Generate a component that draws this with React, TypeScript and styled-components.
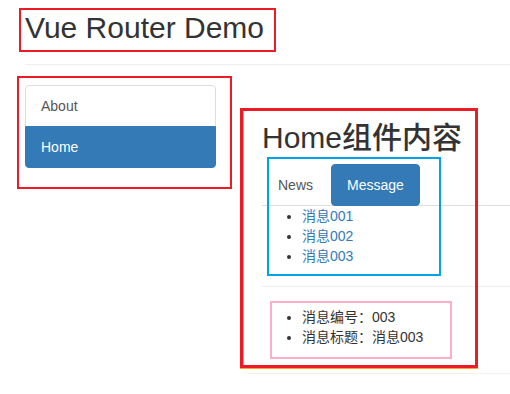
import React from "react";
import styled, { createGlobalStyle } from "styled-components";

const Global = createGlobalStyle`
  html, body { margin: 0; padding: 0; overflow: hidden; background: #fff; }
  body {
    font-family: "Liberation Sans", "Noto Sans CJK SC", sans-serif;
    font-size: 14px;
    line-height: 1.42857143;
    color: #333;
  }
  * { box-sizing: border-box; }
`;

const Page = styled.div`
  position: relative;
  width: 510px;
  height: 394px;
  padding-left: 25px;
  overflow: hidden;
`;

const PageHeader = styled.div`
  padding: 11px 0 10px;
  margin: 0 -40px 20px 0;
  border-bottom: 1px solid #eee;
`;

const Heading = styled.h2`
  margin: 0 0 10px;
  font-size: 30px;
  line-height: 1.1;
  font-weight: 500;
  color: #333;
`;

const Row = styled.div`
  display: flex;
  gap: 30px;
  align-items: flex-start;
`;

const ListGroup = styled.div`
  width: 191px;
  flex: none;
  display: flex;
  flex-direction: column;
`;

const ListItem = styled.a<{ $active?: boolean }>`
  display: block;
  padding: 10px 15px;
  line-height: 20px;
  margin-bottom: -1px;
  border: 1px solid ${(p) => (p.$active ? "#337ab7" : "#ddd")};
  background: ${(p) => (p.$active ? "#337ab7" : "#fff")};
  color: ${(p) => (p.$active ? "#fff" : "#555")};
  text-decoration: none;
  &:first-child { border-radius: 4px 4px 0 0; }
  &:last-child { border-radius: 0 0 4px 4px; margin-bottom: 0; }
`;

const Panel = styled.div`
  flex: 1;
  margin-right: -60px;
  background: #fff;
  border: 1px solid transparent;
  border-radius: 4px;
  box-shadow: 0 1px 1px rgba(0, 0, 0, 0.05);
`;

const PanelBody = styled.div`
  padding: 15px;
`;

const PanelTitle = styled(Heading)`
  margin: 20px 0 10px;
`;

const Tabs = styled.ul`
  display: flex;
  margin: 0;
  padding: 0;
  list-style: none;
  border-bottom: 1px solid #ddd;
`;

const Tab = styled.li`
  margin-bottom: -1px;
`;

const TabLink = styled.a<{ $active?: boolean }>`
  display: block;
  margin-right: 2px;
  padding: 10px 15px;
  line-height: 20px;
  border: 1px solid ${(p) => (p.$active ? "#337ab7" : "transparent")};
  border-radius: ${(p) => (p.$active ? "4px" : "4px 4px 0 0")};
  background: ${(p) => (p.$active ? "#337ab7" : "transparent")};
  color: ${(p) => (p.$active ? "#fff" : "#555")};
  text-decoration: none;
`;

const BulletList = styled.ul`
  margin: 0 0 10px;
  padding-left: 40px;
  list-style: disc;
  li { line-height: 20px; }
`;

const MsgLink = styled.a`
  color: #337ab7;
  text-decoration: none;
`;

const Rule = styled.hr`
  margin: 20px 0;
  border: 0;
  border-top: 1px solid #eee;
  height: 0;
`;

const Mark = styled.div<{ $color: string; $w?: number }>`
  position: absolute;
  border: ${(p) => p.$w ?? 2}px solid ${(p) => p.$color};
  pointer-events: none;
`;

const BigMark = styled(Mark)`
  box-shadow: inset 1px 0 0 #f7a53a, 0 1px 0 #f7a53a;
`;

type Box = { l: number; t: number; w: number; h: number };
const box = (b: Box) => ({ left: b.l, top: b.t, width: b.w, height: b.h });

export default function App() {
  return (
    <>
      <Global />
      <Page>
        <PageHeader>
          <Heading>Vue Router Demo</Heading>
        </PageHeader>
        <Row>
          <ListGroup>
            <ListItem>About</ListItem>
            <ListItem $active>Home</ListItem>
          </ListGroup>
          <Panel>
            <PanelBody>
              <PanelTitle>Home组件内容</PanelTitle>
              <Tabs>
                <Tab>
                  <TabLink>News</TabLink>
                </Tab>
                <Tab>
                  <TabLink $active>Message</TabLink>
                </Tab>
              </Tabs>
              <BulletList>
                <li><MsgLink>消息001</MsgLink></li>
                <li><MsgLink>消息002</MsgLink></li>
                <li><MsgLink>消息003</MsgLink></li>
              </BulletList>
              <Rule />
              <BulletList>
                <li>消息编号：003</li>
                <li>消息标题：消息003</li>
              </BulletList>
            </PanelBody>
          </Panel>
        </Row>

        <Mark $color="#ed1c24" style={box({ l: 19, t: 8, w: 257, h: 44 })} />
        <Mark $color="#ed1c24" style={box({ l: 17, t: 76, w: 215, h: 113 })} />
        <BigMark $color="#ed1c24" $w={3} style={box({ l: 240, t: 108, w: 238, h: 260 })} />
        <Mark $color="#00a2e8" style={box({ l: 267, t: 157, w: 174, h: 119 })} />
        <Mark $color="#ffaec9" style={box({ l: 270, t: 301, w: 182, h: 58 })} />
      </Page>
    </>
  );
}
